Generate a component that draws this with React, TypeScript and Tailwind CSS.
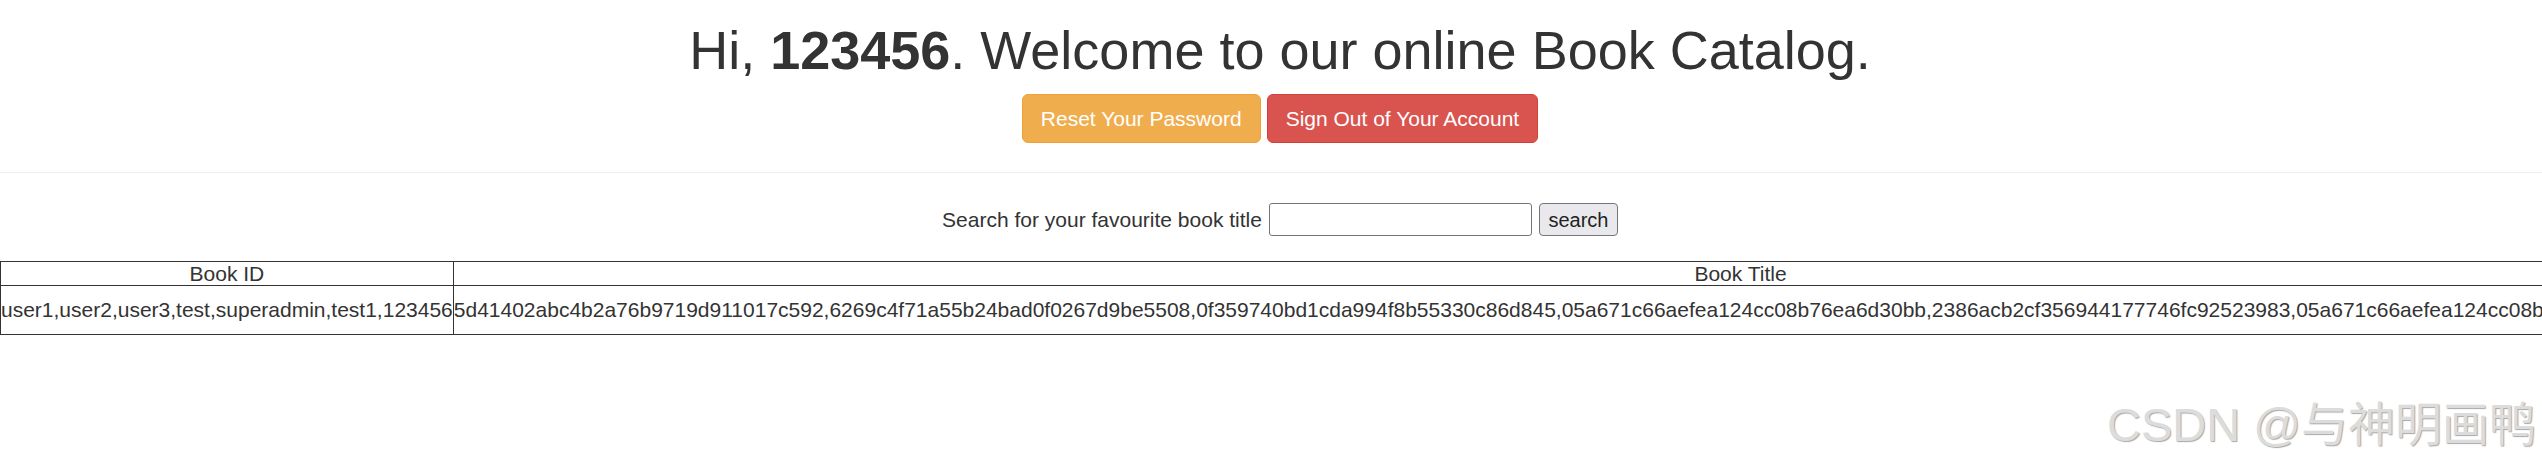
import React from 'react';

const users = 'user1,user2,user3,test,superadmin,test1,123456';

const hashes = [
  '5d41402abc4b2a76b9719d911017c592',
  '6269c4f71a55b24bad0f0267d9be5508',
  '0f359740bd1cda994f8b55330c86d845',
  '05a671c66aefea124cc08b76ea6d30bb',
  '2386acb2cf356944177746fc92523983',
  '05a671c66aefea124cc08b76ea6d30bb',
  'e10adc3949ba59abbe56e057f20f883e',
].join(',');

export default function App() {
  return (
    <div className="relative h-[450px] w-[2560px] bg-white text-center text-[21px] leading-[1.42857] text-[#333] font-['Liberation_Sans',Arial,sans-serif]">
      {/* Page header */}
      <h1 className="mt-[21px] mb-[14px] text-[54px] leading-[1.1] font-normal">
        Hi, <b className="font-bold">123456</b>. Welcome to our online Book Catalog.
      </h1>

      <div className="flex justify-center gap-[6px]">
        <a className="flex h-[49px] items-center rounded-[6px] border border-[#eea236] bg-[#f0ad4e] px-[18px] text-white">
          Reset Your Password
        </a>
        <a className="flex h-[49px] items-center rounded-[6px] border border-[#d43f3a] bg-[#d9534f] px-[18px] text-white">
          Sign Out of Your Account
        </a>
      </div>

      <div className="mt-[29px] border-t-[1.5px] border-[#eee]" />

      {/* Search form */}
      <form className="mt-[30px] flex h-[33px] items-center justify-center">
        <span>Search for your favourite book title</span>
        <input
          type="text"
          className="ml-[7px] h-[33px] w-[263px] rounded-[3px] border border-[#767676] bg-white px-1 text-[20px] outline-none"
        />
        <button
          type="button"
          className="ml-[7px] h-[33px] w-[79px] rounded-[4px] border border-[#767676] bg-[#e9e9ed] text-[20px] text-[#222]"
        >
          search
        </button>
      </form>

      {/* Results */}
      <table className="mt-[25px] border-collapse border border-[#333] whitespace-nowrap leading-[22px]">
        <thead>
          <tr className="h-[24px]">
            <th className="border border-[#333] p-0 font-normal">Book ID</th>
            <th className="border border-[#333] p-0 font-normal">Book Title</th>
          </tr>
        </thead>
        <tbody>
          <tr className="h-[49px]">
            <td className="border border-[#333] p-0">{users}</td>
            <td className="border border-[#333] p-0">{hashes}</td>
          </tr>
        </tbody>
      </table>

      {/* Watermark */}
      <div className="absolute left-[2107px] top-[380px] text-[47px] leading-none text-[#dcdcdc] [text-shadow:1px_1px_1px_#a8a8a8] font-['Liberation_Sans','Noto_Sans_CJK_SC',sans-serif]">
        CSDN @与神明画鸭
      </div>
    </div>
  );
}
